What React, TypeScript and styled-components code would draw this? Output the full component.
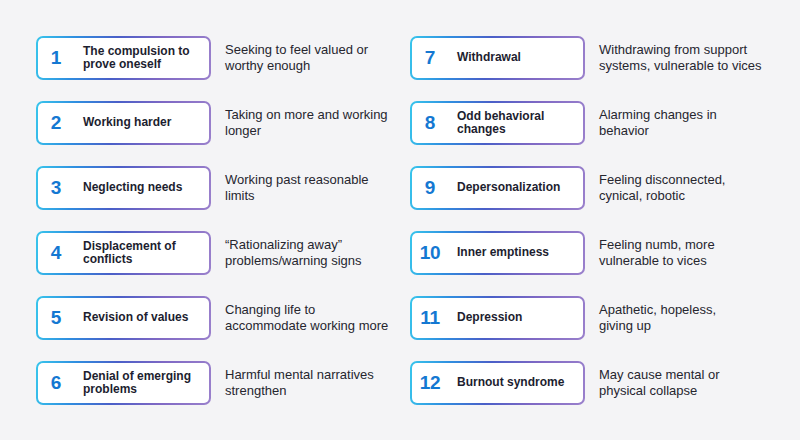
import styled, { createGlobalStyle } from "styled-components";

type Stage = {
  num: number;
  title: string;
  lines: string[];
};

const stages: Stage[] = [
  { num: 1, title: "The compulsion to prove oneself", lines: ["Seeking to feel valued or", "worthy enough"] },
  { num: 2, title: "Working harder", lines: ["Taking on more and working", "longer"] },
  { num: 3, title: "Neglecting needs", lines: ["Working past reasonable", "limits"] },
  { num: 4, title: "Displacement of conflicts", lines: ["\u201CRationalizing away\u201D", "problems/warning signs"] },
  { num: 5, title: "Revision of values", lines: ["Changing life to", "accommodate working more"] },
  { num: 6, title: "Denial of emerging problems", lines: ["Harmful mental narratives", "strengthen"] },
  { num: 7, title: "Withdrawal", lines: ["Withdrawing from support", "systems, vulnerable to vices"] },
  { num: 8, title: "Odd behavioral changes", lines: ["Alarming changes in", "behavior"] },
  { num: 9, title: "Depersonalization", lines: ["Feeling disconnected,", "cynical, robotic"] },
  { num: 10, title: "Inner emptiness", lines: ["Feeling numb, more", "vulnerable to vices"] },
  { num: 11, title: "Depression", lines: ["Apathetic, hopeless,", "giving up"] },
  { num: 12, title: "Burnout syndrome", lines: ["May cause mental or", "physical collapse"] },
];

const GlobalStyle = createGlobalStyle`
  html, body {
    margin: 0;
    padding: 0;
    background: #f4f4f6;
  }
  body {
    font-family: "Liberation Sans", Arial, sans-serif;
  }
`;

const Page = styled.div`
  width: 800px;
  height: 440px;
  box-sizing: border-box;
  padding: 36px 0 0 36px;
  background: #f4f4f6;
`;

const Columns = styled.div`
  display: grid;
  grid-template-columns: 374px 374px;
  grid-auto-flow: column;
  grid-template-rows: repeat(6, 44px);
  row-gap: 21px;
`;

const Row = styled.div`
  display: flex;
  align-items: flex-start;
  gap: 14px;
`;

const Card = styled.div`
  box-sizing: border-box;
  width: 175px;
  height: 44px;
  flex: none;
  display: grid;
  grid-template-columns: 36px 1fr;
  column-gap: 9px;
  align-items: center;
  border: 2px solid transparent;
  border-radius: 7px;
  background:
    linear-gradient(#ffffff, #ffffff) padding-box,
    linear-gradient(100deg, #38c6ec 0%, #2f8ee0 22%, #4a5fc8 45%, #7e68c4 70%, #9a80cc 100%) border-box;
`;

const Num = styled.span`
  text-align: center;
  font-size: 19px;
  font-weight: 700;
  color: #1478d2;
  letter-spacing: -0.2px;
`;

const Title = styled.span`
  font-size: 12px;
  line-height: 13.5px;
  font-weight: 700;
  color: #1d1e30;
  padding-right: 8px;
`;

const Desc = styled.p`
  margin: 6px 0 0;
  font-size: 13px;
  line-height: 16px;
  color: #26262f;
  white-space: nowrap;
`;

const Line = styled.span`
  display: block;
`;

export default function App() {
  return (
    <>
      <GlobalStyle />
      <Page>
        <Columns>
          {stages.map((s) => (
            <Row key={s.num}>
              <Card>
                <Num>{s.num}</Num>
                <Title>{s.title}</Title>
              </Card>
              <Desc>
                {s.lines.map((l) => (
                  <Line key={l}>{l}</Line>
                ))}
              </Desc>
            </Row>
          ))}
        </Columns>
      </Page>
    </>
  );
}
